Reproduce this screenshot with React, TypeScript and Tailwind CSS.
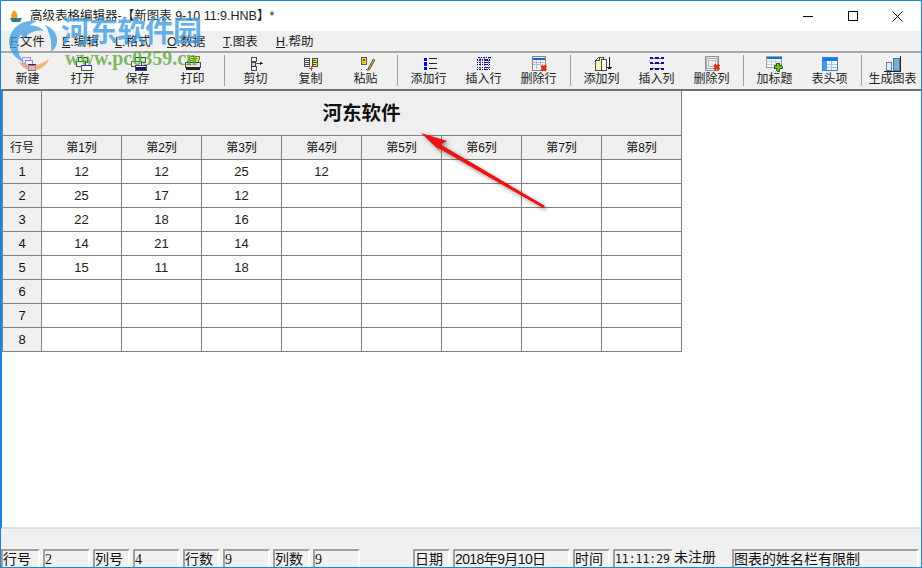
import React from 'react';

const Win = ({ children }: { children: React.ReactNode }) => (
  <svg width="20" height="16" viewBox="0 0 24 20" shapeRendering="crispEdges">{children}</svg>
);

const icons: Record<string, React.ReactNode> = {
  new: (
    <Win>
      <rect x="4.5" y="1.5" width="11" height="8" fill="#e8e4ff" stroke="#9a8ce0" />
      <rect x="8.5" y="5.5" width="9" height="7" fill="#f4f4ff" stroke="#7a6cd0" />
      <rect x="12.5" y="10.5" width="9" height="7" fill="#fff" stroke="#1c1ca0" />
      <rect x="12" y="10" width="10" height="2" fill="#2222c0" />
    </Win>
  ),
  open: (
    <Win>
      <rect x="6.5" y="1.5" width="11" height="6" fill="#d8f0d8" stroke="#222" />
      <rect x="6" y="1" width="12" height="2" fill="#106030" />
      <rect x="3.5" y="6.5" width="11" height="6" fill="#e8f4e8" stroke="#222" />
      <rect x="3" y="6" width="12" height="2" fill="#208040" />
      <rect x="9.5" y="11.5" width="13" height="7" fill="#fff" stroke="#222" />
      <rect x="9" y="11" width="14" height="2" fill="#1c2ce0" />
    </Win>
  ),
  save: (
    <Win>
      <rect x="8.5" y="1.5" width="13" height="6" fill="#d8f0d8" stroke="#222" />
      <rect x="8" y="1" width="14" height="2" fill="#106030" />
      <rect x="3.5" y="6.5" width="13" height="6" fill="#e8f4e8" stroke="#222" />
      <rect x="3" y="6" width="14" height="2" fill="#208060" />
      <rect x="8.5" y="11.5" width="14" height="7" fill="#f4f4f4" stroke="#222" />
      <rect x="9" y="14" width="13" height="4" fill="#14147c" />
    </Win>
  ),
  print: (
    <Win>
      <path d="M8 1h13l-3 7H5z" fill="#d8e84a" stroke="#446020" strokeWidth="1" />
      <path d="M9 3h8M8 5h8" stroke="#3a7a3a" />
      <rect x="2.5" y="8.5" width="19" height="6" fill="#e4e4e4" stroke="#222" />
      <rect x="3" y="14" width="18" height="3" fill="#222" />
      <rect x="5" y="10" width="4" height="1" fill="#222" />
    </Win>
  ),
  cut: (
    <Win>
      <rect x="6.5" y="1.5" width="6" height="5" fill="#f4f4f4" stroke="#222" />
      <rect x="6.5" y="7.5" width="5" height="5" fill="#d0d8e8" stroke="#223" />
      <rect x="6.5" y="13.5" width="6" height="5" fill="#f4f4f4" stroke="#222" />
      <path d="M12 9h8" stroke="#222" />
      <path d="M18 7v4M19 8v2M20 9h1" stroke="#222" />
    </Win>
  ),
  copy: (
    <Win>
      <rect x="3.5" y="3.5" width="7" height="9" fill="#fff" stroke="#222" />
      <path d="M5 6h4M5 8h4M5 10h4" stroke="#222" />
      <rect x="13.5" y="3.5" width="7" height="9" fill="#f2e65a" stroke="#222" />
      <path d="M15 6h3M15 8h4M15 10h3" stroke="#222" />
      <path d="M12 13v6M9 16h6" stroke="#f01010" />
    </Win>
  ),
  paste: (
    <Win>
      <rect x="6.5" y="1.5" width="6" height="9" fill="#f2d83a" stroke="#333" />
      <path d="M8 4h3M8 6h3M8 8h2" stroke="#333" />
      <path d="M6 17h1M9 17h1M12 17h1" stroke="#333" />
      <path d="M21 4l-6 11-1 3 3-2 6-11z" fill="#e8b040" stroke="#333" shapeRendering="auto" />
    </Win>
  ),
  addrow: (
    <Win>
      <rect x="6" y="2" width="4" height="4" fill="#0000f0" />
      <rect x="6" y="8" width="4" height="4" fill="#0000f0" />
      <rect x="6" y="14" width="4" height="4" fill="#0000f0" />
      <path d="M12 3h10M12 9h10M12 16h10" stroke="#222" strokeWidth="1.3" />
    </Win>
  ),
  insrow: (
    <Win>
      <path d="M5 2h16M3 5h18M3 8h18M3 11h18M3 14h18M3 17h18" stroke="#10108c" strokeWidth="1.3" strokeDasharray="2 1" />
      <path d="M7 2v15M12 2v15M17 2v15" stroke="#6060a0" strokeDasharray="2 1" />
    </Win>
  ),
  delrow: (
    <Win>
      <rect x="3.5" y="0.5" width="17" height="17" fill="#f4f4f4" stroke="#666" />
      <rect x="5" y="2" width="14" height="3" fill="#1060d0" />
      <path d="M5 8h13M5 11h9M9 5v11M14 5v6" stroke="#aac" />
      <path d="M15 12l6 6M21 12l-6 6" stroke="#e02c10" strokeWidth="3.5" shapeRendering="auto" />
    </Win>
  ),
  addcol: (
    <Win>
      <path d="M3.5 5.5l5-4h5v16h-10z" fill="#fdf0b8" stroke="#222" />
      <path d="M8.5 2v4h-4" stroke="#222" fill="none" />
      <rect x="11.5" y="4.5" width="6" height="13" fill="#fff" stroke="#222" />
      <path d="M21 1v14" stroke="#222" strokeWidth="1.3" />
      <path d="M18 14h6M19 15h4M20 16h2" stroke="#222" strokeWidth="1.3" />
    </Win>
  ),
  inscol: (
    <Win>
      <path d="M3 3h4M10 3h4M17 3h4M3 9h4M10 9h4M17 9h4M3 16h4M10 16h4M17 16h4" stroke="#10108c" strokeWidth="2.4" />
      <path d="M7 3h3M14 3h3M7 9h3M14 9h3M7 16h3M14 16h3" stroke="#7070b0" strokeWidth="1.2" />
    </Win>
  ),
  delcol: (
    <Win>
      <rect x="3.5" y="0.5" width="17" height="17" fill="#eee" stroke="#777" />
      <rect x="5.5" y="2.5" width="13" height="13" fill="none" stroke="#999" />
      <rect x="7.5" y="5.5" width="9" height="7" fill="none" stroke="#aaa" />
      <path d="M15 11l6 6M21 11l-6 6" stroke="#e02c10" strokeWidth="3.5" shapeRendering="auto" />
    </Win>
  ),
  addtitle: (
    <Win>
      <rect x="1.5" y="0.5" width="19" height="14" fill="#f6f6f6" stroke="#889" />
      <rect x="2" y="1" width="19" height="3" fill="#1070e0" />
      <path d="M2 7h18M2 10h18M7 4v10M13 4v10" stroke="#bcc" />
      <path d="M14 9h4v3h3v4h-3v3h-4v-3h-3v-4h3z" fill="#60c020" stroke="#204000" />
    </Win>
  ),
  header: (
    <Win>
      <rect x="2.5" y="1.5" width="19" height="17" fill="#f4f8ff" stroke="#1060d0" />
      <rect x="3" y="2" width="18" height="4" fill="#1080f0" />
      <rect x="3" y="6" width="5" height="12" fill="#40a0f0" />
      <path d="M8 10h13M8 14h13M14 6v12" stroke="#a0b8d0" />
    </Win>
  ),
  chart: (
    <Win>
      <rect x="3.5" y="8.5" width="7" height="9" fill="#e4f0f8" stroke="#406080" />
      <rect x="12.5" y="2.5" width="7" height="15" fill="#70b0e0" stroke="#406080" />
      <path d="M21 0v19H1" stroke="#222" strokeWidth="1.3" fill="none" />
    </Win>
  ),
};

type Tool = { key: string; label: string } | 'sep';

const tools: Tool[] = [
  { key: 'new', label: '新建' },
  { key: 'open', label: '打开' },
  { key: 'save', label: '保存' },
  { key: 'print', label: '打印' },
  'sep',
  { key: 'cut', label: '剪切' },
  { key: 'copy', label: '复制' },
  { key: 'paste', label: '粘贴' },
  'sep',
  { key: 'addrow', label: '添加行' },
  { key: 'insrow', label: '插入行' },
  { key: 'delrow', label: '删除行' },
  'sep',
  { key: 'addcol', label: '添加列' },
  { key: 'inscol', label: '插入列' },
  { key: 'delcol', label: '删除列' },
  'sep',
  { key: 'addtitle', label: '加标题' },
  { key: 'header', label: '表头项' },
  'sep',
  { key: 'chart', label: '生成图表' },
];

const menus = [
  { k: 'F', t: '.文件', w: 'w-[52px]' },
  { k: 'E', t: '.编辑', w: 'w-[53px]' },
  { k: 'L', t: '.格式', w: 'w-[52px]' },
  { k: 'O', t: '.数据', w: 'w-[56px]' },
  { k: 'T', t: '.图表', w: 'w-[53px]' },
  { k: 'H', t: '.帮助', w: 'w-[52px]' },
];

const rows = [
  ['12', '12', '25', '12'],
  ['25', '17', '12'],
  ['22', '18', '16'],
  ['14', '21', '14'],
  ['15', '11', '18'],
  [],
  [],
  [],
];

const cols = [1, 2, 3, 4, 5, 6, 7, 8];
const line = 'border-r border-b border-[#808080]';

const Stat = ({ w, children, cls = '' }: { w: string; children: React.ReactNode; cls?: string }) => (
  <div
    className={`${w} ${cls} h-[18px] shrink-0 border-t-2 border-l-2 border-t-[#a0a0a0] border-l-[#a0a0a0] border-r-2 border-r-white leading-[17px] whitespace-nowrap overflow-hidden text-[#111]`}
  >
    {children}
  </div>
);

const serif = "font-['Liberation_Serif','Noto_Sans_CJK_SC',serif] text-[14px]";

export default function App() {
  return (
    <div className="relative w-[922px] h-[568px] overflow-hidden flex flex-col bg-white border border-[#1a86d8] font-['Liberation_Sans','Noto_Sans_CJK_SC',sans-serif] text-[14px] text-[#111]">
      {/* title bar */}
      <div className="h-[30px] shrink-0 flex items-center bg-white">
        <svg className="ml-[8px] mr-[7px]" width="14" height="14" viewBox="0 0 14 14">
          <path d="M5 1c3 2 4 5 3 8H3C1 6 3 4 5 1z" fill="#f0a020" />
          <path d="M1 9h12l-2 4H3z" fill="#2c7a8c" />
        </svg>
        <span className="text-[12.5px] text-[#222]">高级表格编辑器-【新图表 9-10 11:9.HNB】*</span>
        <div className="ml-auto flex items-center">
          <div className="w-[45px] flex justify-center">
            <div className="w-[10px] h-px bg-black" />
          </div>
          <div className="w-[45px] flex justify-center">
            <div className="w-[10px] h-[10px] border border-black" />
          </div>
          <div className="w-[45px] flex justify-center mr-[1px]">
            <svg width="11" height="11" viewBox="0 0 11 11">
              <path d="M0.5 0.5l10 10M10.5 0.5l-10 10" stroke="#000" />
            </svg>
          </div>
        </div>
      </div>

      {/* menu */}
      <div className="h-[20px] shrink-0 flex items-center pl-[9px] pt-[2px] bg-[#f0f0f0] text-[12.5px] text-[#222]">
        {menus.map((m) => (
          <div key={m.k} className={m.w}>
            <span className="underline">{m.k}</span>
            {m.t}
          </div>
        ))}
      </div>

      {/* toolbar */}
      <div className="h-[40px] shrink-0 flex bg-[#f0f0f0] border-t-2 border-t-[#a8a8a8] border-b-2 border-b-[#707070] -ml-px">
        {tools.map((t, i) =>
          t === 'sep' ? (
            <div key={i} className="w-[8px] flex justify-center pt-[2px] pb-[3px]">
              <div className="w-px bg-[#a0a0a0]" />
            </div>
          ) : (
            <div key={t.key} className="w-[55px] flex flex-col items-center">
              <div className="h-[19px] pt-[3px]">{icons[t.key]}</div>
              <div className="text-[12px] leading-[14px] whitespace-nowrap text-[#222]">{t.label}</div>
            </div>
          ),
        )}
      </div>

      {/* sheet */}
      <div className="h-[438px] shrink-0 bg-white border-l border-[#1a86d8] border-b-2 border-b-[#e0e0e0] text-[12px]">
        <div className="grid w-[680px] grid-cols-[39px_repeat(8,80px)] grid-rows-[45px_repeat(9,24px)] border-l border-[#808080]">
          <div className={`bg-[#efefef] ${line}`} />
          <div className={`col-span-8 bg-[#efefef] flex items-center justify-center pt-px text-[19.5px] font-bold text-[#111] ${line}`}>
            河东软件
          </div>
          <div className={`bg-[#efefef] flex items-center justify-center ${line}`}>行号</div>
          {cols.map((c) => (
            <div key={c} className={`bg-[#efefef] flex items-center justify-center ${line}`}>
              第{c}列
            </div>
          ))}
          {rows.map((r, i) => (
            <React.Fragment key={i}>
              <div className={`bg-[#efefef] flex items-center justify-center text-[13px] ${line}`}>{i + 1}</div>
              {cols.map((c) => (
                <div key={c} className={`flex items-center justify-center text-[13px] text-[#2a2010] ${line}`}>
                  {r[c - 1] ?? ''}
                </div>
              ))}
            </React.Fragment>
          ))}
        </div>
      </div>

      {/* status bar */}
      <div className="flex-1 flex items-end bg-[#f0f0f0]">
        <div className="flex items-end">
          <Stat w="w-[39px]">行号</Stat>
          <Stat w="w-[47px]" cls={`ml-[3px] ${serif}`}>2</Stat>
          <Stat w="w-[37px]" cls="ml-[3px]">列号</Stat>
          <Stat w="w-[47px]" cls={`ml-[3px] ${serif}`}>4</Stat>
          <Stat w="w-[37px]" cls="ml-[3px]">行数</Stat>
          <Stat w="w-[47px]" cls={`ml-[3px] ${serif}`}>9</Stat>
          <Stat w="w-[37px]" cls="ml-[3px]">列数</Stat>
          <Stat w="w-[47px]" cls={`ml-[3px] ${serif}`}>9</Stat>
          <Stat w="w-[37px]" cls="ml-[53px]">日期</Stat>
          <Stat w="w-[117px]" cls="ml-[3px] tracking-[-0.6px]">2018年9月10日</Stat>
          <Stat w="w-[37px]" cls="ml-[3px]">时间</Stat>
          <Stat w="w-[60px]" cls="ml-[3px] font-['DejaVu_Sans_Mono',monospace] text-[11.4px]">11:11:29</Stat>
          <div className="w-[58px] ml-[1px] h-[18px] leading-[17px] text-[#111]">未注册</div>
          <Stat w="w-[187px]">图表的姓名栏有限制</Stat>
        </div>
      </div>

      {/* site watermark over the window */}
      <div className="absolute left-[6px] top-[16px] pointer-events-none opacity-75">
        <svg width="54" height="62" viewBox="0 0 54 62">
          <path d="M30 4C14 2 3 12 2 24c0 10 6 18 15 21-5-6-7-12-6-19C12 16 20 9 30 4z" fill="#3c9ce0" />
          <path d="M12 12c10-6 20-4 25 2-8-1-15 1-21 8z" fill="#3c9ce0" />
          <path d="M38 8c8 3 13 9 12 18-1 4-3 7-6 9 1-10-1-19-6-27z" fill="#3c9ce0" />
          <path d="M12 44c9 7 20 5 30-2-4 13-25 17-30 2z" fill="#f0a060" />
        </svg>
      </div>
      <div className="absolute left-[60px] top-[10px] pointer-events-none text-[29px] leading-[36px] font-bold tracking-[-1px] text-[#3c9ce0]/80 font-['Noto_Sans_CJK_SC',sans-serif]">
        河东软件园
      </div>
      <div className="absolute left-[64px] top-[47px] pointer-events-none text-[20px] leading-[20px] font-bold text-[#5aa83a]/80 font-['Liberation_Serif',serif]">
        www.pc0359.cn
      </div>

      {/* red arrow annotation */}
      <svg
        className="absolute left-[-1px] top-[-1px] pointer-events-none drop-shadow-[2px_2px_2px_rgba(0,0,0,0.45)]"
        width="922"
        height="568"
        viewBox="0 0 922 568"
      >
        <path d="M421 133L447 141 440.5 144.5 545 206 543 208 437.5 147.5 440 151z" fill="#f01010" />
      </svg>
    </div>
  );
}
